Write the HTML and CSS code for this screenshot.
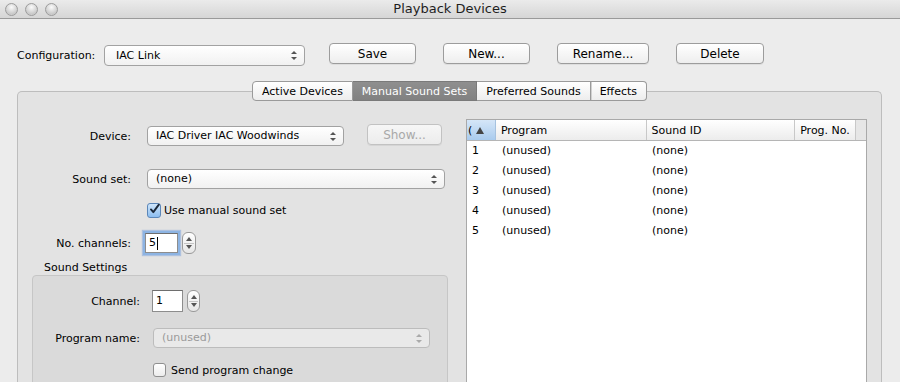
FILE: index.html
```html
<!DOCTYPE html>
<html lang="en">
<head>
  <meta charset="UTF-8">
  <title>Playback Devices</title>
  <link rel="stylesheet" href="styles.css">
</head>
<body>
  <div class="window">
    <!-- barre de titre -->
    <div class="titlebar">
      <div class="lights"><span></span><span></span><span></span></div>
      <div class="title">Playback Devices</div>
    </div>

    <div class="config">
      <span class="config-label">Configuration:</span>
      <div class="popup popup-config">IAC Link<i class="arrows"></i></div>
      <button class="btn btn-save">Save</button>
      <button class="btn btn-new">New...</button>
      <button class="btn btn-rename">Rename...</button>
      <button class="btn btn-delete">Delete</button>
    </div>

    <div class="tabview">
      <div class="tabs">
        <span class="tab">Active Devices</span>
        <span class="tab active">Manual Sound Sets</span>
        <span class="tab">Preferred Sounds</span>
        <span class="tab sep">Effects</span>
      </div>

      <div class="panel">
        <div class="form">
          <div class="row row-device">
            <span class="lbl">Device:</span>
            <div class="popup popup-device">IAC Driver IAC Woodwinds<i class="arrows"></i></div>
            <button class="btn btn-show" disabled>Show...</button>
          </div>
          <div class="row row-set">
            <span class="lbl">Sound set:</span>
            <div class="popup popup-set">(none)<i class="arrows"></i></div>
          </div>
          <div class="row row-check">
            <span class="check on"><svg width="14" height="14" viewBox="0 0 14 14"><path d="M2.5 7.5 L5.5 11 L12.5 1.5" fill="none" stroke="#1b2838" stroke-width="2.4" stroke-linecap="round" stroke-linejoin="round"/></svg></span>
            <span>Use manual sound set</span>
          </div>
          <div class="row row-chan">
            <span class="lbl">No. channels:</span>
            <div class="field focus">5<span class="caret"></span></div>
            <span class="stepper"><i class="up"></i><i class="down"></i></span>
          </div>

          <div class="group-title">Sound Settings</div>
          <div class="group">
            <div class="row row-gchan">
              <span class="lbl">Channel:</span>
              <div class="field field-small">1</div>
              <span class="stepper"><i class="up"></i><i class="down"></i></span>
            </div>
            <div class="row row-prog">
              <span class="lbl">Program name:</span>
              <div class="popup popup-prog disabled">(unused)<i class="arrows"></i></div>
            </div>
            <div class="row row-send">
              <span class="check"></span>
              <span>Send program change</span>
            </div>
          </div>
        </div>

        <div class="table">
          <div class="thead">
            <span class="th c0 sorted">(<i class="sort"></i></span>
            <span class="th c1">Program</span>
            <span class="th c2">Sound ID</span>
            <span class="th c3">Prog. No.</span>
            <span class="th corner"></span>
          </div>
          <div class="tr"><span class="c0">1</span><span class="c1">(unused)</span><span class="c2">(none)</span></div>
          <div class="tr"><span class="c0">2</span><span class="c1">(unused)</span><span class="c2">(none)</span></div>
          <div class="tr"><span class="c0">3</span><span class="c1">(unused)</span><span class="c2">(none)</span></div>
          <div class="tr"><span class="c0">4</span><span class="c1">(unused)</span><span class="c2">(none)</span></div>
          <div class="tr"><span class="c0">5</span><span class="c1">(unused)</span><span class="c2">(none)</span></div>
        </div>
      </div>
    </div>
  </div>
</body>
</html>
```

FILE: styles.css
```css
* {box-sizing:border-box;margin:0;padding:0;}
body {width:900px;height:382px;overflow:hidden;background:#ececec;font-family:"DejaVu Sans",sans-serif;font-size:11px;color:#000;}

/* titre */
.titlebar {height:19px;background:linear-gradient(#ebebeb,#d6d6d6);border-bottom:1px solid #9a9a9a;display:flex;align-items:center;position:relative;}
.lights {display:flex;gap:7px;padding-left:5px;}
.lights span {width:13px;height:13px;border-radius:50%;border:1px solid #9c9c9c;background:radial-gradient(circle at 50% 30%,#fbfbfb,#c9c9c9 70%,#dcdcdc);}
.title {position:absolute;left:0;right:0;text-align:center;font-size:13px;color:#1e1e1e;top:1px;}

/* configuration */
.config {display:flex;align-items:flex-start;height:24px;margin-top:24px;padding-left:17px;}
.config-label {margin-top:6px;width:87px;}
.popup {position:relative;height:21px;border:1px solid #a2a2a2;border-radius:4px;background:linear-gradient(#ffffff,#f1f1f1);padding:0 0 0 8px;line-height:19px;white-space:nowrap;}
.popup .arrows {position:absolute;right:7px;top:5px;width:6px;height:9px;}
.popup .arrows::before,.popup .arrows::after {content:"";position:absolute;left:0;border-left:3px solid transparent;border-right:3px solid transparent;}
.popup .arrows::before {top:0;border-bottom:3px solid #555;}
.popup .arrows::after {bottom:0;border-top:3px solid #555;}
.popup-config {width:201px;margin-top:2px;margin-right:24px;padding-left:11px;line-height:20px;}

.btn {height:21px;border:1px solid #9c9c9c;border-radius:4px;background:linear-gradient(#ffffff,#eeeeee);font-family:inherit;font-size:12px;color:#000;box-shadow:0 1px 0 rgba(0,0,0,.06);}
.btn-save {width:87px;}
.btn-new {width:87px;margin-left:27px;}
.btn-rename {width:92px;margin-left:27px;}
.btn-delete {width:88px;margin-left:27px;}
.btn-show {width:75px;margin-left:23px;margin-top:-3px;color:#a8a8a8;border-color:#c2c2c2;background:linear-gradient(#f6f6f6,#ececec);}

/* onglets */
.tabview {margin:14px 18px 0 17px;}
.tabs {display:flex;justify-content:center;position:relative;z-index:1;margin-bottom:-10px;}
.tabs .tab {height:20px;line-height:20px;padding:0 9px;border:1px solid #9a9a9a;border-left:none;background:linear-gradient(#ffffff,#ededed);font-size:11px;}
.tabs .tab:first-child {border-left:1px solid #9a9a9a;border-radius:4px 0 0 4px;}
.tabs .tab:last-child {border-radius:0 4px 4px 0;}
.tabs .tab.sep {box-shadow:inset 1px 0 0 #d0d0d0;}
.tabs .tab.active {background:linear-gradient(#8f8f8f,#818181);color:#fff;border-color:#7a7a7a;}

.panel {display:flex;align-items:flex-start;height:291px;padding-top:27px;background:#e3e3e3;border:1px solid #bdbdbd;border-bottom:none;border-radius:5px 5px 0 0;}

/* formulaire */
.form {width:448px;padding-top:7px;}
.row {display:flex;align-items:center;}
.lbl {width:113px;text-align:right;margin-right:16px;}
.row-device {height:20px;}
.popup-device {width:197px;height:20px;line-height:18px;}
.row-set {height:20px;margin-top:23px;}
.popup-set {width:298px;height:20px;line-height:18px;}
.row-check {height:16px;margin-top:13px;padding-left:129px;gap:3px;}
.check {width:14px;height:15px;border:1px solid #8f8f8f;border-radius:3px;background:linear-gradient(#ffffff,#ececec);display:flex;align-items:center;justify-content:center;}
.check.on {background:linear-gradient(#cfe6fb,#8cbdef);border-color:#5b86b8;}
.check.on svg {margin:-2px 0 0 1px;}
.row-chan {height:20px;margin-top:15px;}
.row-chan .lbl {margin-right:14px;}
.field {height:20px;width:33px;background:#fff;border:1px solid #8d8d8d;border-top-color:#6e6e6e;padding-left:3px;line-height:18px;display:flex;align-items:center;}
.field.focus {box-shadow:0 0 0 2px #8db4e3,0 0 1px 3px rgba(120,160,220,.5);}
.caret {width:1px;height:13px;background:#000;margin-left:1px;}
.stepper {width:14px;height:22px;margin-left:4px;border:1px solid #9a9a9a;border-radius:6px;background:linear-gradient(#ffffff,#e6e6e6);position:relative;}
.stepper::before {content:"";position:absolute;left:1px;right:1px;top:10px;border-top:1px solid #c4c4c4;}
.stepper i {position:absolute;left:3px;border-left:3px solid transparent;border-right:3px solid transparent;}
.stepper .up {top:4px;border-bottom:4px solid #555;}
.stepper .down {bottom:4px;border-top:4px solid #555;}

.group-title {margin:8px 0 0 26px;height:14px;font-size:11px;}
.group {width:416px;height:120px;margin-left:14px;background:#dadada;border:1px solid #c6c6c6;border-radius:4px;padding-top:14px;}
.group .lbl {width:107px;margin-right:12px;}
.row-gchan {height:22px;}
.field-small {width:31px;height:22px;}
.row-gchan .stepper {width:13px;}
.row-prog {height:20px;margin-top:16px;}
.row-prog .lbl {margin-right:13px;}
.popup-prog {width:277px;height:20px;line-height:18px;}
.popup.disabled {color:#9a9a9a;background:#e9e9e9;border-color:#bcbcbc;}
.popup.disabled .arrows::before {border-bottom-color:#aaa;}
.popup.disabled .arrows::after {border-top-color:#aaa;}
.row-send {height:14px;margin-top:15px;padding-left:120px;gap:5px;}
.row-send .check {width:13px;height:14px;}

/* tableau */
.table {width:401px;height:264px;background:#fff;border:1px solid #a9a9a9;border-bottom:none;}
.thead {display:flex;height:21px;border-bottom:1px solid #b5b5b5;}
.th {height:20px;line-height:21px;background:linear-gradient(#ffffff,#ececec);border-right:1px solid #c8c8c8;padding-left:5px;}
.th.sorted {background:linear-gradient(#d5e6f8,#a9cbee);border-right:1px solid #a6c2df;padding-left:1px;display:flex;align-items:center;gap:4px;}
.sort {width:0;height:0;border-left:4px solid transparent;border-right:4px solid transparent;border-bottom:7px solid #444;}
.c0 {width:29px;}
.c1 {width:151px;}
.c2 {width:149px;}
.c3 {width:61px;}
.th.corner {width:10px;border-right:none;background:#e6e6e6;}
.tr {display:flex;height:20px;line-height:19px;}
.tr span {padding-left:5px;}
.tr .c1 {padding-left:6px;}
```
